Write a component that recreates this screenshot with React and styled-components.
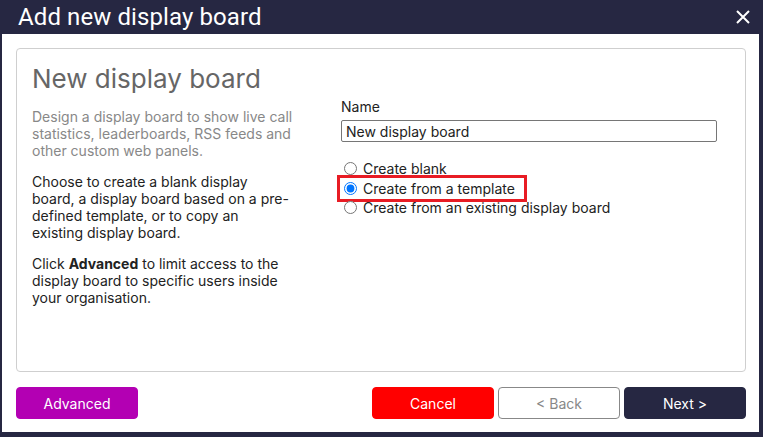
import React from "react";
import styled, { createGlobalStyle } from "styled-components";

const Global = createGlobalStyle`
  html, body { margin: 0; padding: 0; }
  body { font-family: Inter, "Noto Sans", sans-serif; }
`;

const Window = styled.div`
  width: 763px;
  height: 437px;
  box-sizing: border-box;
  background: #262742;
  padding: 0 4px 5px 2px;
  display: flex;
  flex-direction: column;
`;

const TitleBar = styled.div`
  height: 34px;
  flex: none;
  display: flex;
  align-items: center;
  justify-content: space-between;
  padding: 0 9px 0 16px;
  color: #fff;
`;

const Title = styled.h1`
  margin: 0;
  font-family: Roboto, "Liberation Sans", sans-serif;
  font-weight: 400;
  font-size: 24px;
  line-height: 28px;
  letter-spacing: 0.1px;
`;

const CloseButton = styled.button`
  border: 0;
  background: none;
  padding: 0;
  width: 14px;
  height: 14px;
  display: flex;
  cursor: pointer;
`;

const Body = styled.div`
  flex: 1;
  background: #fff;
  display: flex;
  flex-direction: column;
  padding: 14px 13px 13px 14px;
  gap: 15px;
`;

const Panel = styled.div`
  flex: 1;
  border: 1px solid #cfcfcf;
  border-radius: 4px;
  padding: 15px 15px 16px;
  display: grid;
  grid-template-columns: 292px 1fr;
  column-gap: 17px;
`;

const LeftCol = styled.div`
  display: flex;
  flex-direction: column;
`;

const Heading = styled.h2`
  margin: 0 0 14px 0;
  font-size: 26px;
  font-weight: 400;
  color: #666;
  line-height: 30px;
`;

const Para = styled.p`
  margin: 0 0 14px 0;
  font-size: 14px;
  line-height: 17px;
  white-space: nowrap;
  color: ${(p) => (p.$muted ? "#888" : "#222")};
`;

const RightCol = styled.div`
  padding-top: 34px;
  padding-right: 13px;
  display: flex;
  flex-direction: column;
`;

const FieldLabel = styled.label`
  font-size: 14px;
  line-height: 17px;
  color: #222;
  margin-bottom: 5px;
`;

const TextInput = styled.input`
  box-sizing: border-box;
  height: 22px;
  width: 100%;
  border: 1px solid #767676;
  border-radius: 2px;
  padding: 0 4px;
  font-family: Inter, sans-serif;
  font-size: 14px;
  color: #222;
  margin-bottom: 17px;
`;

const RadioRow = styled.label`
  display: flex;
  align-items: center;
  height: 19.5px;
  font-size: 14px;
  color: #222;
  width: fit-content;
  padding-right: 8px;
  outline: ${(p) => (p.$highlight ? "3px solid #e81c24" : "none")};
  outline-offset: 1px;
  input {
    margin: 0 6px 0 3px;
    width: 13px;
    height: 13px;
  }
`;

const Footer = styled.div`
  display: flex;
  gap: 4px;
`;

const Spacer = styled.div`
  flex: 1;
`;

const Button = styled.button`
  width: 122px;
  height: 32px;
  border-radius: 4px;
  font-family: Inter, sans-serif;
  font-size: 14px;
  border: 1px solid ${(p) => p.$border || p.$bg};
  background: ${(p) => p.$bg};
  color: ${(p) => p.$color || "#fff"};
  cursor: pointer;
`;

export default function App() {
  return (
    <>
      <Global />
      <Window>
        <TitleBar>
          <Title>Add new display board</Title>
          <CloseButton aria-label="Close">
            <svg width="14" height="14" viewBox="0 0 14 14">
              <path d="M1 1 L13 13 M13 1 L1 13" stroke="#fff" strokeWidth="2" />
            </svg>
          </CloseButton>
        </TitleBar>
        <Body>
          <Panel>
            <LeftCol>
              <Heading>New display board</Heading>
              <Para $muted>
                Design a display board to show live call<br />
                statistics, leaderboards, RSS feeds and<br />
                other custom web panels.
              </Para>
              <Para>
                Choose to create a blank display<br />
                board, a display board based on a pre-<br />
                defined template, or to copy an<br />
                existing display board.
              </Para>
              <Para>
                Click <b>Advanced</b> to limit access to the<br />
                display board to specific users inside<br />
                your organisation.
              </Para>
            </LeftCol>
            <RightCol>
              <FieldLabel htmlFor="name">Name</FieldLabel>
              <TextInput id="name" defaultValue="New display board" />
              <RadioRow>
                <input type="radio" name="mode" />
                Create blank
              </RadioRow>
              <RadioRow $highlight>
                <input type="radio" name="mode" defaultChecked />
                Create from a template
              </RadioRow>
              <RadioRow>
                <input type="radio" name="mode" />
                Create from an existing display board
              </RadioRow>
            </RightCol>
          </Panel>
          <Footer>
            <Button $bg="#b300b3">Advanced</Button>
            <Spacer />
            <Button $bg="#ff0000">Cancel</Button>
            <Button $bg="#fff" $border="#888" $color="#888">&lt; Back</Button>
            <Button $bg="#262742">Next &gt;</Button>
          </Footer>
        </Body>
      </Window>
    </>
  );
}
